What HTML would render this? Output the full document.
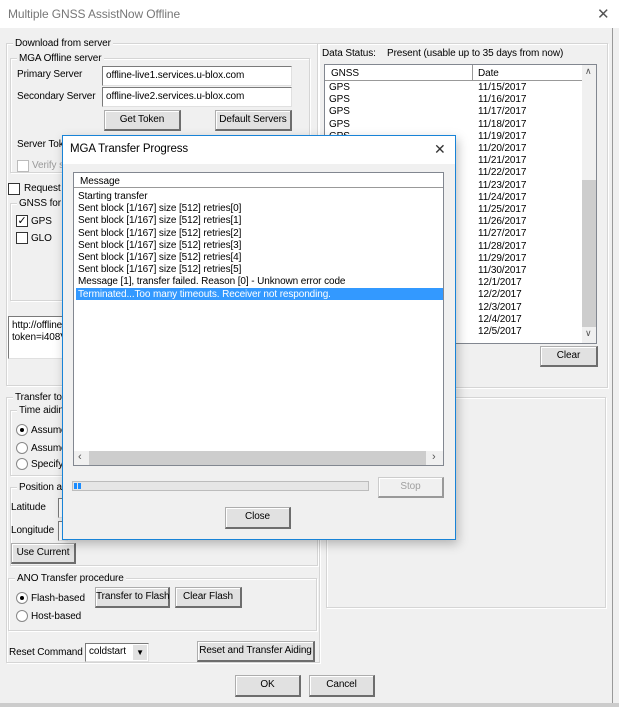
<!DOCTYPE html>
<html><head><style>
*{box-sizing:border-box;margin:0;padding:0}
body{width:619px;height:707px;background:#f0f0f0;font-family:"Liberation Sans",sans-serif;font-size:10px;color:#000;position:relative;overflow:hidden;letter-spacing:-0.1px}
.a{position:absolute;white-space:nowrap}
.grp{position:absolute;border:1px solid #d5d5d5;box-shadow:inset 1px 1px 0 #fff,1px 1px 0 #fff}
.gl{position:absolute;top:-7px;left:6px;background:#f0f0f0;padding:0 2px;line-height:13px;white-space:nowrap}
.btn{position:absolute;white-space:nowrap;background:#e1e1e1;border:1px solid #adadad;border-right:2px solid #6d6d6d;border-bottom:2px solid #6d6d6d;box-shadow:inset 1px 1px 0 #fff;text-align:center;line-height:17px}
.inp{position:absolute;white-space:nowrap;overflow:hidden;background:#fff;border:1px solid #7a7a7a;border-right-color:#e0e0e0;border-bottom-color:#e0e0e0;padding-left:3px;line-height:17px}
.cb{position:absolute;width:12px;height:12px;border:1px solid #333;background:#fff}
.rb{position:absolute;width:12px;height:12px;border:1px solid #888;border-radius:50%;background:#fff}
.rb.on::after{content:"";position:absolute;left:3px;top:3px;width:4px;height:4px;border-radius:50%;background:#000}
</style></head><body>
<div class="a" style="left:0;top:0;width:619px;height:28px;background:#fff"></div>
<div class="a" style="left:8px;top:7px;font-size:12px;color:#777">Multiple GNSS AssistNow Offline</div>
<div class="a" style="left:597px;top:5px;font-size:15px;color:#555">✕</div>
<div class="a" style="left:612px;top:28px;width:1px;height:676px;background:#999"></div>
<div class="a" style="left:0;top:703px;width:619px;height:4px;background:#ccc"></div>

<div class="grp" style="left:6px;top:43px;width:313px;height:343px"><div class="gl">Download from server</div></div>
<div class="grp" style="left:10px;top:58px;width:300px;height:115px"><div class="gl">MGA Offline server</div></div>
<div class="a" style="left:17px;top:69px">Primary Server</div>
<div class="inp" style="left:102px;top:66px;width:190px;height:20px">offline-live1.services.u-blox.com</div>
<div class="a" style="left:17px;top:91px">Secondary Server</div>
<div class="inp" style="left:102px;top:87px;width:190px;height:20px">offline-live2.services.u-blox.com</div>
<div class="btn" style="left:104px;top:110px;width:77px;height:21px">Get Token</div>
<div class="btn" style="left:215px;top:110px;width:77px;height:21px">Default Servers</div>
<div class="a" style="left:17px;top:139px">Server Token</div>
<div class="cb" style="left:17px;top:160px;border-color:#bbb"></div>
<div class="a" style="left:32px;top:160px;color:#999">Verify server</div>
<div class="cb" style="left:8px;top:183px"></div>
<div class="a" style="left:24px;top:183px">Request</div>
<div class="grp" style="left:10px;top:203px;width:60px;height:98px"><div class="gl">GNSS for A</div></div>
<div class="cb" style="left:16px;top:215px;font-size:11px;line-height:10px;text-align:center">✓</div>
<div class="a" style="left:31px;top:216px">GPS</div>
<div class="cb" style="left:16px;top:232px"></div>
<div class="a" style="left:31px;top:233px">GLO</div>
<div class="inp" style="left:8px;top:316px;width:60px;height:43px;line-height:12px;padding-top:3px">http://offline<br>token=i408V</div>

<div class="grp" style="left:6px;top:397px;width:314px;height:266px"><div class="gl">Transfer to r</div></div>
<div class="grp" style="left:10px;top:410px;width:60px;height:66px"><div class="gl">Time aiding</div></div>
<div class="rb on" style="left:16px;top:424px"></div><div class="a" style="left:31px;top:425px">Assume</div>
<div class="rb" style="left:16px;top:442px"></div><div class="a" style="left:31px;top:443px">Assume</div>
<div class="rb" style="left:16px;top:458px"></div><div class="a" style="left:31px;top:459px">Specify</div>
<div class="grp" style="left:10px;top:487px;width:308px;height:79px"><div class="gl">Position aid</div></div>
<div class="a" style="left:11px;top:502px">Latitude</div>
<div class="inp" style="left:58px;top:498px;width:10px;height:20px"></div>
<div class="a" style="left:11px;top:525px">Longitude</div>
<div class="inp" style="left:58px;top:521px;width:10px;height:20px"></div>
<div class="btn" style="left:11px;top:543px;width:65px;height:21px">Use Current</div>
<div class="grp" style="left:8px;top:578px;width:309px;height:53px"><div class="gl">ANO Transfer procedure</div></div>
<div class="rb on" style="left:16px;top:592px"></div><div class="a" style="left:31px;top:593px">Flash-based</div>
<div class="rb" style="left:16px;top:610px"></div><div class="a" style="left:31px;top:611px">Host-based</div>
<div class="btn" style="left:95px;top:587px;width:75px;height:21px">Transfer to Flash</div>
<div class="btn" style="left:175px;top:587px;width:67px;height:21px">Clear Flash</div>
<div class="a" style="left:9px;top:647px">Reset Command</div>
<div class="inp" style="left:85px;top:643px;width:64px;height:19px;line-height:15px">coldstart<span style="position:absolute;right:1px;top:1px;width:14px;height:15px;background:#e1e1e1;font-size:8px;text-align:center;line-height:15px">▼</span></div>
<div class="btn" style="left:197px;top:641px;width:118px;height:21px">Reset and Transfer Aiding</div>
<div class="btn" style="left:235px;top:675px;width:66px;height:22px">OK</div>
<div class="btn" style="left:309px;top:675px;width:66px;height:22px">Cancel</div>

<div class="grp" style="left:317px;top:43px;width:291px;height:345px"></div>
<div class="a" style="left:322px;top:48px">Data Status:</div>
<div class="a" style="left:387px;top:48px">Present (usable up to 35 days from now)</div>
<div class="a" style="left:324px;top:64px;width:273px;height:280px;background:#fff;border:1px solid #828790"></div>
<div class="a" style="left:325px;top:65px;width:257px;height:16px;background:#fff;border-bottom:1px solid #999"></div>
<div class="a" style="left:472px;top:65px;width:1px;height:15px;background:#999"></div>
<div class="a" style="left:331px;top:68px">GNSS</div>
<div class="a" style="left:478px;top:68px">Date</div>
<div class="a" style="left:582px;top:65px;width:14px;height:278px;background:#f0f0f0"></div>
<div class="a" style="left:582px;top:180px;width:14px;height:147px;background:#cdcdcd"></div>
<div class="a" style="left:585px;top:66px;font-size:9px;color:#555">∧</div>
<div class="a" style="left:585px;top:328px;font-size:9px;color:#555">∨</div>
<div class="a" style="left:329px;top:82px;line-height:12.2px">GPS<br>GPS<br>GPS<br>GPS<br>GPS</div>
<div class="a" style="left:478px;top:82px;line-height:12.2px">11/15/2017<br>11/16/2017<br>11/17/2017<br>11/18/2017<br>11/19/2017<br>11/20/2017<br>11/21/2017<br>11/22/2017<br>11/23/2017<br>11/24/2017<br>11/25/2017<br>11/26/2017<br>11/27/2017<br>11/28/2017<br>11/29/2017<br>11/30/2017<br>12/1/2017<br>12/2/2017<br>12/3/2017<br>12/4/2017<br>12/5/2017</div>
<div class="btn" style="left:540px;top:346px;width:58px;height:21px">Clear</div>
<div class="grp" style="left:326px;top:397px;width:280px;height:211px"></div>

<div class="a" style="left:62px;top:135px;width:394px;height:405px;background:#f0f0f0;border:1px solid #1883d7;box-shadow:2px 4px 10px rgba(0,0,0,.25)"></div>
<div class="a" style="left:63px;top:136px;width:392px;height:28px;background:#fff"></div>
<div class="a" style="left:70px;top:143px;font-size:11.5px">MGA Transfer Progress</div>
<div class="a" style="left:434px;top:141px;font-size:14px;color:#333">✕</div>
<div class="a" style="left:73px;top:172px;width:371px;height:294px;background:#fff;border:1px solid #828790"></div>
<div class="a" style="left:74px;top:173px;width:369px;height:15px;border-bottom:1px solid #999"></div>
<div class="a" style="left:80px;top:176px">Message</div>
<div class="a" style="left:76px;top:288px;width:367px;height:12px;background:#3399ff"></div>
<div class="a" style="left:78px;top:191px;line-height:12.2px">Starting transfer<br>Sent block [1/167] size [512] retries[0]<br>Sent block [1/167] size [512] retries[1]<br>Sent block [1/167] size [512] retries[2]<br>Sent block [1/167] size [512] retries[3]<br>Sent block [1/167] size [512] retries[4]<br>Sent block [1/167] size [512] retries[5]<br>Message [1], transfer failed. Reason [0] - Unknown error code<br><span style="color:#fff">Terminated...Too many timeouts. Receiver not responding.</span></div>
<div class="a" style="left:74px;top:451px;width:369px;height:14px;background:#f0f0f0"></div>
<div class="a" style="left:89px;top:451px;width:337px;height:14px;background:#cdcdcd"></div>
<div class="a" style="left:78px;top:451px;font-size:11px;color:#555">‹</div>
<div class="a" style="left:432px;top:451px;font-size:11px;color:#555">›</div>
<div class="a" style="left:72px;top:481px;width:297px;height:10px;background:#e6e6e6;border:1px solid #bcbcbc"></div>
<div class="a" style="left:74px;top:483px;width:3px;height:6px;background:#1a8cff"></div>
<div class="a" style="left:78px;top:483px;width:3px;height:6px;background:#1a8cff"></div>
<div class="btn" style="left:378px;top:477px;width:66px;height:21px;color:#a0a0a0;background:#f0f0f0;border-color:#ccc #999 #999 #ccc">Stop</div>
<div class="btn" style="left:225px;top:507px;width:66px;height:22px">Close</div>
</body></html>
